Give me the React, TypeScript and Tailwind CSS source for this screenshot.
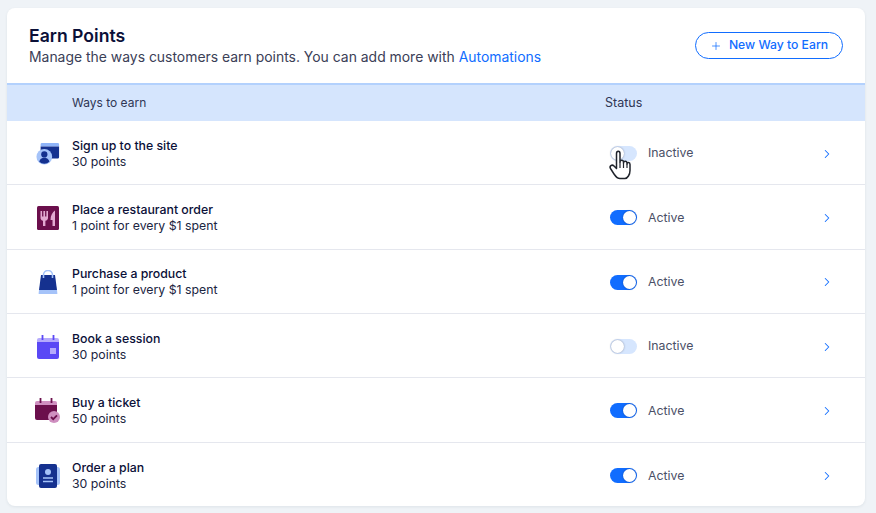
import { ChevronRight, Plus } from "lucide-react"

const SignupIcon = () => (
  <svg width="24" height="24" viewBox="0 0 26 26">
    <path d="M5 2.500a1.500 1.500 0 0 1 1.500-1.500h17A1.500 1.500 0 0 1 25 2.500V5H5z" fill="#8fb4f8" />
    <path d="M5 5h20v11.500a1.500 1.500 0 0 1-1.500 1.500H5z" fill="#15318f" />
    <circle cx="9" cy="16" r="8.500" fill="#a5c3f9" />
    <circle cx="9" cy="13.500" r="3.400" fill="#15318f" />
    <path d="M3.500 21.500c.6-3 2.700-4.500 5.500-4.500s4.900 1.500 5.500 4.500a8.200 8.200 0 0 1-11 0z" fill="#15318f" />
  </svg>
)

const RestaurantIcon = () => (
  <svg width="22" height="24" viewBox="0 0 22 24">
    <rect width="22" height="24" rx="1.500" fill="#6b0f4c" />
    <path d="M3.500 5v7c0 1.500 1 2.500 2.500 2.800V20h2.400v-5.200c1.500-.3 2.600-1.300 2.600-2.800V5H9.400v5.500H8.100V5H6.400v5.500H5.100V5z" fill="#e3a9d2" />
    <path d="M18 4.500c-2.500 1.500-4.500 5-4.500 9.500h2V20H18z" fill="#e3a9d2" />
  </svg>
)

const BagIcon = () => (
  <svg width="20" height="25" viewBox="0 0 20 25">
    <path d="M5.500 8V5a4.500 4.500 0 0 1 9 0v3" fill="none" stroke="#a5c3f9" strokeWidth="1.600" />
    <path d="M3 5h14l2 15H1z" fill="#15318f" />
    <path d="M1 20h18l.4 3.500a.6.6 0 0 1-.6.5H1.200a.6.6 0 0 1-.6-.5z" fill="#a5c3f9" />
    <path d="M5.500 5v3M14.500 5v3" stroke="#a5c3f9" strokeWidth="1.600" />
  </svg>
)

const CalendarIcon = () => (
  <svg width="22" height="24" viewBox="0 0 22 24">
    <path d="M0 5a2 2 0 0 1 2-2h18a2 2 0 0 1 2 2v4H0z" fill="#b5aafc" />
    <path d="M0 7h22v15a2 2 0 0 1-2 2H2a2 2 0 0 1-2-2z" fill="#5a48f5" />
    <path d="M5.500 0v5M16.500 0v5" stroke="#5a48f5" strokeWidth="1.800" />
    <rect x="13" y="13" width="6" height="6" fill="#b5aafc" />
  </svg>
)

const TicketIcon = () => (
  <svg width="25" height="25" viewBox="0 0 25 25">
    <path d="M0 5a2 2 0 0 1 2-2h18a2 2 0 0 1 2 2v4H0z" fill="#cf8fc0" />
    <path d="M0 7h22v13a2 2 0 0 1-2 2H2a2 2 0 0 1-2-2z" fill="#6b0f4c" />
    <path d="M5.500 0v5M16.500 0v5" stroke="#6b0f4c" strokeWidth="1.800" />
    <circle cx="19" cy="19" r="6" fill="#cf8fc0" />
    <path d="M16 19l2.200 2.200 3.800-3.800" fill="none" stroke="#6b0f4c" strokeWidth="1.800" />
  </svg>
)

const PlanIcon = () => (
  <svg width="24" height="24" viewBox="0 0 24 24">
    <rect x="0" y="3" width="24" height="18" rx="2.500" fill="#a5c3f9" />
    <rect x="3" y="0" width="18" height="24" rx="2" fill="#15318f" />
    <circle cx="12" cy="8" r="3" fill="#a5c3f9" />
    <path d="M7 14h10M7 17.500h10" stroke="#a5c3f9" strokeWidth="1.500" />
  </svg>
)

const rows = [
  { title: "Sign up to the site", sub: "30 points", icon: <SignupIcon />, active: false },
  { title: "Place a restaurant order", sub: "1 point for every $1 spent", icon: <RestaurantIcon />, active: true },
  { title: "Purchase a product", sub: "1 point for every $1 spent", icon: <BagIcon />, active: true },
  { title: "Book a session", sub: "30 points", icon: <CalendarIcon />, active: false },
  { title: "Buy a ticket", sub: "50 points", icon: <TicketIcon />, active: true },
  { title: "Order a plan", sub: "30 points", icon: <PlanIcon />, active: true },
]

function Toggle({ on }: { on: boolean }) {
  return (
    <div className={`flex h-[15px] w-[27px] items-center rounded-full p-px ${on ? "justify-end bg-[#116dff]" : "justify-start bg-[#d6e6fe]"}`}>
      <div className="size-[13px] rounded-full bg-white shadow-[0_0_2px_rgba(0,6,36,0.4)]" />
    </div>
  )
}

const HandCursor = () => (
  <svg className="absolute left-[-2px] top-[6px]" width="26" height="31" viewBox="0 0 26 31">
    <path
      d="M8.500 3.500c0-3 3.500-3 3.500 0v8.500c0-2.500 3.500-2.500 3.500 0v1c0-2.500 3.500-2.500 3.500 0v1c0-2 3-2 3 .5v6c0 4-2.500 8-5 8h-5c-2.500 0-4-1.500-6-4.500l-3.500-5.500c-1.500-2.500 1.500-4.500 3.500-2.500l2.500 2.500z"
      fill="#ffffff"
      stroke="#20242c"
      strokeWidth="1.500"
      strokeLinejoin="round"
    />
    <path d="M12 12v6M15.500 13v5M19 14v4" stroke="#20242c" strokeWidth="1.200" />
  </svg>
)

export default function App() {
  return (
    <div className="h-[513px] w-[876px] bg-[#eff3f7] pb-[7px] pl-[7px] pr-[11px] pt-2 font-['Inter','Noto_Sans',sans-serif] text-[#000624]">
      <div className="flex h-full flex-col overflow-hidden rounded-lg bg-white shadow-[0_1px_3px_rgba(22,45,61,0.08)]">
        <div className="flex h-[75px] shrink-0 items-start justify-between px-[22px]">
          <div className="pt-[17px]">
            <h1 className="text-[17.600px] font-semibold leading-[22px] text-[#0b1038]">Earn Points</h1>
            <p className="mt-px text-[13.930px] leading-[18px] text-[#3b4057]">
              Manage the ways customers earn points. You can add more with{" "}
              <span className="text-[#116dff]">Automations</span>
            </p>
          </div>
          <button className="mt-6 flex h-[27px] w-[148px] items-center justify-center gap-[7px] rounded-full border border-[#116dff] bg-white text-[12.200px] font-[450] text-[#116dff]">
            <Plus size={12} strokeWidth={1.500} />
            New Way to Earn
          </button>
        </div>

        <div className="flex h-[38px] shrink-0 items-center border-t-2 border-[#b3d1fd] bg-[#d5e5fd] text-[12px] text-[#2f3654]">
          <div className="w-[598px] pl-[65px]">Ways to earn</div>
          <div className="text-[12.500px]">Status</div>
        </div>

        <div className="flex flex-col">
          {rows.map((row, i) => (
            <div
              key={row.title}
              className={`flex h-[64.330px] shrink-0 items-center pt-[2px] ${i < rows.length - 1 ? "border-b border-[#e5e7ee]" : ""}`}
            >
              <div className="flex w-[65px] shrink-0 justify-center pl-4">{row.icon}</div>
              <div className="w-[538px] text-[12.300px] leading-4">
                <div className="font-[450] text-[#0b1038]">{row.title}</div>
                <div className="text-[#20253f]">{row.sub}</div>
              </div>
              <div className="relative flex w-[210px] items-center gap-[11px]">
                <Toggle on={row.active} />
                {i === 0 && <HandCursor />}
                <span className="text-[12.300px] text-[#4a4f66]">{row.active ? "Active" : "Inactive"}</span>
              </div>
              <ChevronRight size={14} strokeWidth={1.750} className="text-[#116dff]" />
            </div>
          ))}
        </div>
      </div>
    </div>
  )
}
